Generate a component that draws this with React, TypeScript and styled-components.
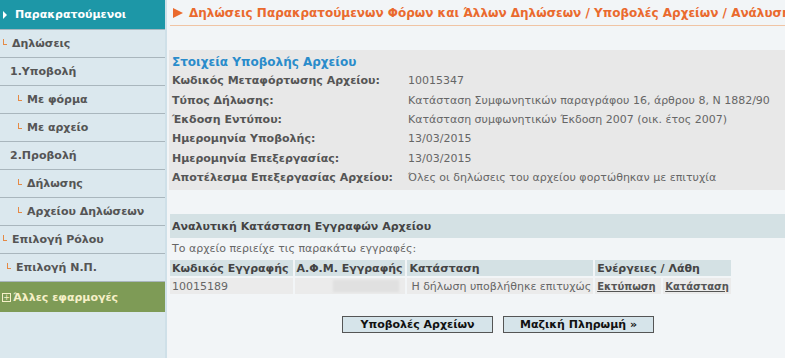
import React from 'react';
import styled, { createGlobalStyle } from 'styled-components';

const GlobalStyle = createGlobalStyle`
  html, body {
    margin: 0;
    padding: 0;
    background: #f2f5f7;
  }
  body {
    font-family: "DejaVu Sans", Verdana, sans-serif;
    font-size: 11px;
    color: #555;
  }
`;

type MenuItem = { label: string; indent: number; marker?: boolean };

const menu: MenuItem[] = [
  { label: 'Δηλώσεις', indent: 3, marker: true },
  { label: '1.Υποβολή', indent: 10 },
  { label: 'Με φόρμα', indent: 18, marker: true },
  { label: 'Με αρχείο', indent: 18, marker: true },
  { label: '2.Προβολή', indent: 10 },
  { label: 'Δήλωσης', indent: 18, marker: true },
  { label: 'Αρχείου Δηλώσεων', indent: 18, marker: true },
  { label: 'Επιλογή Ρόλου', indent: 3, marker: true },
  { label: 'Επιλογή Ν.Π.', indent: 7, marker: true },
];

const info: [string, string][] = [
  ['Κωδικός Μεταφόρτωσης Αρχείου:', '10015347'],
  ['Τύπος Δήλωσης:', 'Κατάσταση Συμφωνητικών παραγράφου 16, άρθρου 8, Ν 1882/90'],
  ['Έκδοση Εντύπου:', 'Κατάσταση συμφωνητικών Έκδοση 2007 (οικ. έτος 2007)'],
  ['Ημερομηνία Υποβολής:', '13/03/2015'],
  ['Ημερομηνία Επεξεργασίας:', '13/03/2015'],
  ['Αποτέλεσμα Επεξεργασίας Αρχείου:', 'Όλες οι δηλώσεις του αρχείου φορτώθηκαν με επιτυχία'],
];

export default function App() {
  return (
    <>
      <GlobalStyle />
      <Page>
        <Sidebar>
          <MenuHead>
            <HeadArrow />
            Παρακρατούμενοι
          </MenuHead>
          {menu.map((m) => (
            <MenuRow key={m.label} $indent={m.indent}>
              {m.marker && <Corner />}
              {m.label}
            </MenuRow>
          ))}
          <MenuGreen>
            <PlusBox>+</PlusBox>
            Άλλες εφαρμογές
          </MenuGreen>
        </Sidebar>

        <Main>
          <TitleBar>
            <TitleArrow />
            <TitleText>
              Δηλώσεις Παρακρατούμενων Φόρων και Άλλων Δηλώσεων / Υποβολές Αρχείων / Ανάλυση Αρχείου
            </TitleText>
          </TitleBar>

          <InfoPanel>
            <InfoTitle>Στοιχεία Υποβολής Αρχείου</InfoTitle>
            <InfoGrid>
              {info.map(([k, v]) => (
                <React.Fragment key={k}>
                  <InfoLabel>{k}</InfoLabel>
                  <InfoValue>{v}</InfoValue>
                </React.Fragment>
              ))}
            </InfoGrid>
          </InfoPanel>

          <SectionBar>Αναλυτική Κατάσταση Εγγραφών Αρχείου</SectionBar>
          <Note>Το αρχείο περιείχε τις παρακάτω εγγραφές:</Note>

          <Records>
            <thead>
              <tr>
                <Th style={{ width: 121 }}>Κωδικός Εγγραφής</Th>
                <Th style={{ width: 108 }}>Α.Φ.Μ. Εγγραφής</Th>
                <Th style={{ width: 184 }}>Κατάσταση</Th>
                <Th colSpan={2}>Ενέργειες / Λάθη</Th>
              </tr>
            </thead>
            <tbody>
              <tr>
                <Td>10015189</Td>
                <Td><Blurred /></Td>
                <Td $right>Η δήλωση υποβλήθηκε επιτυχώς</Td>
                <Td style={{ width: 65 }}><ActionLink href="#">Εκτύπωση</ActionLink></Td>
                <Td $right style={{ width: 65 }}><ActionLink href="#">Κατάσταση</ActionLink></Td>
              </tr>
            </tbody>
          </Records>

          <Buttons>
            <Button>Υποβολές Αρχείων</Button>
            <Button>Μαζική Πληρωμή »</Button>
          </Buttons>
        </Main>
      </Page>
    </>
  );
}

const Page = styled.div`
  display: flex;
  width: 785px;
  height: 358px;
  overflow: hidden;
`;

const Sidebar = styled.nav`
  width: 165px;
  flex-shrink: 0;
  background: #dbe8ee;
  border-right: 2px solid #cfe0e8;
  display: flex;
  flex-direction: column;
`;

const MenuHead = styled.div`
  height: 29px;
  background: #1d97a7;
  color: #fff;
  font-weight: bold;
  font-size: 11px;
  display: flex;
  align-items: center;
  padding-left: 3px;
  border-bottom: 1px solid #a7b8c0;
`;

const HeadArrow = styled.span`
  width: 0;
  height: 0;
  border-top: 4px solid transparent;
  border-bottom: 4px solid transparent;
  border-left: 4px solid #fff;
  margin-right: 8px;
`;

const MenuRow = styled.div<{ $indent: number }>`
  height: 27px;
  border-bottom: 1px solid #a9b6bd;
  display: flex;
  align-items: center;
  padding-left: ${(p) => p.$indent}px;
  font-weight: bold;
  color: #555;
  white-space: nowrap;
`;

const Corner = styled.span`
  width: 3px;
  height: 5px;
  border-left: 1px solid #e58a45;
  border-bottom: 1px solid #e58a45;
  margin-right: 5px;
  margin-top: -3px;
`;

const MenuGreen = styled.div`
  height: 30px;
  background: #7e9b56;
  color: #f6f0c8;
  font-weight: bold;
  font-size: 11px;
  display: flex;
  align-items: center;
  padding-left: 2px;
  white-space: nowrap;
`;

const PlusBox = styled.span`
  width: 7px;
  height: 7px;
  border: 1px solid #f6f0c8;
  font-size: 8px;
  line-height: 7px;
  text-align: center;
  font-weight: normal;
  margin-right: 2px;
`;

const Main = styled.main`
  flex: 1;
  min-width: 0;
  padding-left: 2px;
  display: flex;
  flex-direction: column;
`;

const TitleBar = styled.div`
  height: 25px;
  border-bottom: 1px solid #f0c4a4;
  margin-left: 1px;
  display: flex;
  align-items: center;
  padding-left: 3px;
  overflow: hidden;
`;

const TitleText = styled.span`
  color: #ea6a2e;
  font-weight: bold;
  font-size: 12px;
  white-space: nowrap;
`;

const TitleArrow = styled.span`
  flex-shrink: 0;
  width: 0;
  height: 0;
  border-top: 5px solid transparent;
  border-bottom: 5px solid transparent;
  border-left: 10px solid #ea6a2e;
  margin-right: 6px;
`;

const InfoPanel = styled.section`
  margin-top: 24px;
  background: #e8e8e8;
  padding: 3px 0 5px 3px;
  height: 132px;
`;

const InfoTitle = styled.div`
  color: #2a8ccb;
  font-weight: bold;
  font-size: 12px;
  height: 18px;
  line-height: 18px;
`;

const InfoGrid = styled.div`
  display: grid;
  grid-template-columns: 236px 1fr;
  grid-auto-rows: 19.4px;
  align-items: center;
`;

const InfoLabel = styled.div`
  font-weight: bold;
  color: #555;
  white-space: nowrap;
`;

const InfoValue = styled.div`
  color: #666;
  white-space: nowrap;
`;

const SectionBar = styled.div`
  margin-top: 24px;
  margin-left: 1px;
  height: 24px;
  background: #d4e1e4;
  display: flex;
  align-items: center;
  padding-left: 2px;
  font-weight: bold;
  color: #444;
`;

const Note = styled.div`
  height: 22px;
  line-height: 22px;
  padding-left: 3px;
  color: #666;
`;

const Records = styled.table`
  border-spacing: 2px;
  margin-left: -1px;
  margin-top: -2px;
  width: 565px;
`;

const Th = styled.th`
  background: #d4e1e4;
  height: 16px;
  padding: 0 2px;
  text-align: left;
  font-weight: bold;
  color: #444;
  white-space: nowrap;
`;

const Td = styled.td<{ $right?: boolean }>`
  height: 16px;
  padding: 0 2px;
  text-align: ${(p) => (p.$right ? 'right' : 'left')};
  background: #ebebeb;
  color: #666;
  white-space: nowrap;
`;

const Blurred = styled.div`
  width: 66px;
  height: 12px;
  margin-left: 36px;
  background: #e0e0e0;
  filter: blur(1px);
`;

const ActionLink = styled.a`
  color: #555;
  font-weight: bold;
  text-decoration: underline;
  font-size: 10px;
`;

const Buttons = styled.div`
  display: flex;
  gap: 10px;
  margin-top: 20px;
  margin-left: 173px;
`;

const Button = styled.button`
  width: 151px;
  height: 17px;
  padding: 0;
  background: #d6e4ea;
  border: 1px solid #555;
  border-radius: 0;
  font-family: "DejaVu Sans", Verdana, sans-serif;
  font-size: 11px;
  font-weight: bold;
  color: #111;
`;
